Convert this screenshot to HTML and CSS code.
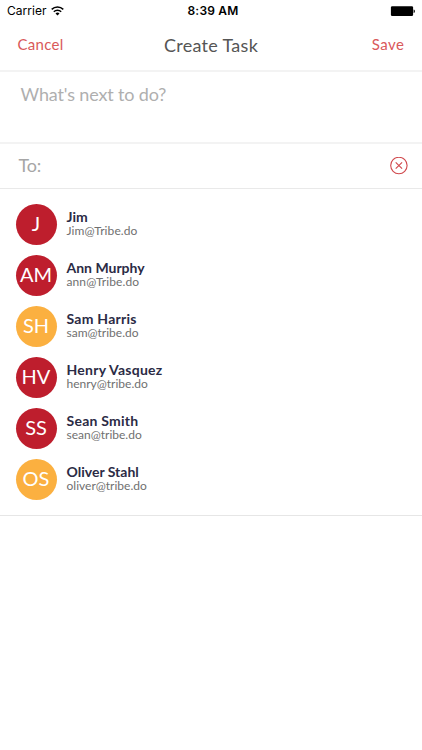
FILE: index.html
```html
<!DOCTYPE html>
<html lang="en">
<head>
<meta charset="utf-8">
<title>Create Task</title>
<link rel="stylesheet" href="styles.css">
</head>
<body>
<div class="status">
  <div class="carrier"><span>Carrier</span>
    <svg width="13" height="10" viewBox="0 0 13 10" fill="none" stroke="#000" stroke-width="1.5"><path d="M.7 3.4a8.3 8.3 0 0 1 11.6 0M2.8 5.8a5.3 5.3 0 0 1 7.4 0"/><path d="M6.5 9.5 4.5 7.5a2.9 2.9 0 0 1 4 0z" fill="#000" stroke="none"/></svg>
  </div>
  <time class="clock">8:39 AM</time>
  <svg class="battery" width="25" height="11" viewBox="0 0 25 11"><rect x=".9" y=".3" width="22.2" height="9.8" rx="1.3"/><path d="M23.6 3.5c1.7.2 1.7 3.4 0 3.6z"/></svg>
</div>
<header class="nav">
  <a class="cancel">Cancel</a>
  <h1 class="title">Create Task</h1>
  <a class="save">Save</a>
</header>
<div class="task"><span class="prompt">What's next to do?</span></div>
<div class="to"><span class="label">To:</span>
  <svg width="18" height="18" viewBox="0 0 18 18" fill="none" stroke="#d0484c"><circle cx="8.9" cy="8.5" r="8.2" stroke-width="1.1"/><path d="M5.7 5.3l6.4 6.4M12.1 5.3l-6.4 6.4" stroke-width="1.1"/></svg>
</div>
<ul class="people">
  <li><span class="avatar">J</span><div><b>Jim</b><small class="e1">Jim@Tribe.do</small></div></li>
  <li><span class="avatar">AM</span><div><b>Ann Murphy</b><small class="e1">ann@Tribe.do</small></div></li>
  <li><span class="avatar gold">SH</span><div><b class="wide">Sam Harris</b><small>sam@tribe.do</small></div></li>
  <li><span class="avatar">HV</span><div><b class="wide">Henry Vasquez</b><small>henry@tribe.do</small></div></li>
  <li><span class="avatar">SS</span><div><b class="wide">Sean Smith</b><small>sean@tribe.do</small></div></li>
  <li><span class="avatar gold">OS</span><div><b>Oliver Stahl</b><small>oliver@tribe.do</small></div></li>
</ul>
</body>
</html>
```
FILE: styles.css
```css
* { box-sizing: border-box; }
body { margin: 0; height: 750px; background: #fff; font-family: Lato, "Liberation Sans", sans-serif; overflow: hidden; white-space: nowrap; }
.status { display: grid; grid-template-columns: 1fr auto 1fr; align-items: center; height: 22px; padding: 0 7px; font: 12px/22px Inter, "Liberation Sans", sans-serif; color: #000; }
.carrier { display: flex; align-items: center; gap: 4px; letter-spacing: .05px; }
.clock { font-weight: 600; letter-spacing: .2px; padding-left: 4px; }
.battery { justify-self: end; }
.nav { display: grid; grid-template-columns: 1fr auto 1fr; align-items: center; height: 50px; padding: 0 17.5px; border-bottom: 2px solid #f3f3f3; }
.cancel, .save { font-size: 15px; line-height: 20px; padding-bottom: 5px; color: #d9595a; letter-spacing: .3px; }
.save { justify-self: end; letter-spacing: .5px; }
.title { margin: 0; padding-bottom: 2px; font-size: 18px; line-height: 24px; font-weight: 400; letter-spacing: .3px; color: #555; }
.task { height: 72px; padding: 10px 20.5px; border-bottom: 2px solid #f3f3f3; }
.prompt { font-size: 18px; line-height: 24px; letter-spacing: -.15px; color: #afafaf; }
.to { height: 45px; display: flex; align-items: center; justify-content: space-between; padding: 0 14px 0 18.5px; border-bottom: 1px solid #e9e9e9; }
.label { padding-bottom: 3px; font-size: 18px; line-height: 24px; letter-spacing: -.2px; color: #a6a6a6; }
.people { list-style: none; margin: 0; padding: 15px 15.5px 16px; height: 327px; border-bottom: 1px solid #e6e6e6; }
.people li { display: flex; align-items: center; height: 41px; margin-bottom: 10px; }
.avatar { width: 41px; height: 41px; margin-right: 10px; border-radius: 50%; background: #be1e2d; color: #fff; font-size: 20px; font-weight: 400; line-height: 39px; text-align: center; }
.gold { background: #fbb040; }
.people b, .people small { display: block; line-height: 14px; }
.people b { font-size: 14px; font-weight: 700; color: #2b2b45; }
.people .wide { letter-spacing: .25px; }
.people small { font-size: 12px; color: #707070; }
.people .e1 { letter-spacing: .1px; }
.people div { padding-bottom: 1px; }
```
